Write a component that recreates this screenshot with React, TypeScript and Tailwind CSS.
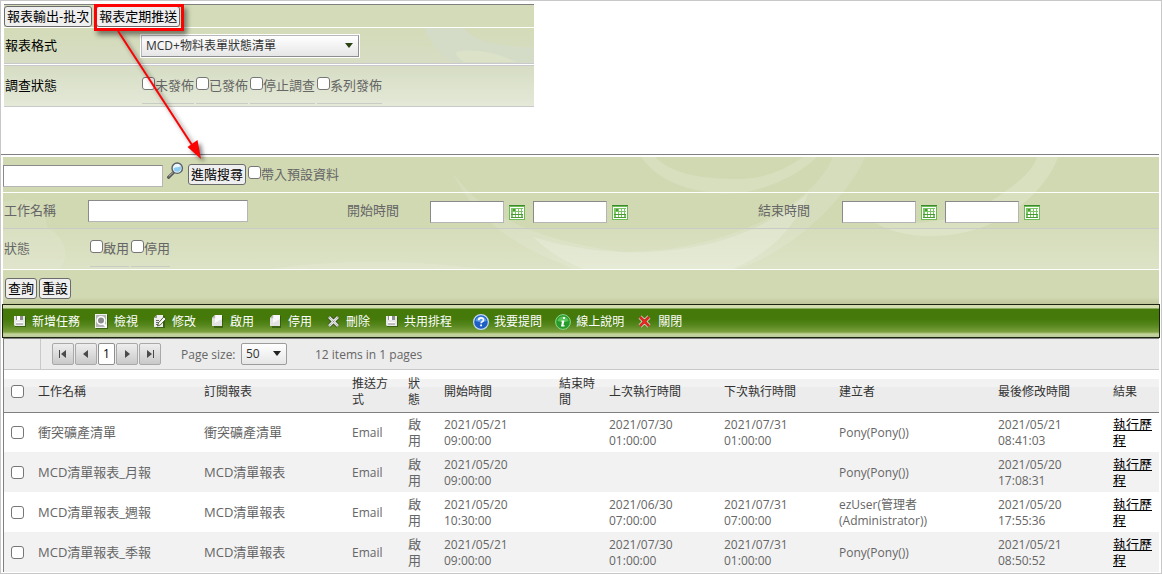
import React from 'react';
import clsx from 'clsx';

const FONT = "font-['Open_Sans','Noto_Sans_CJK_TC',sans-serif]";

type IconName = 'save' | 'view' | 'edit' | 'page' | 'remove' | 'help' | 'info' | 'close';

const actions: { label: string; icon: IconName; spaced?: boolean }[] = [
  { label: '新增任務', icon: 'save' },
  { label: '檢視', icon: 'view' },
  { label: '修改', icon: 'edit' },
  { label: '啟用', icon: 'page' },
  { label: '停用', icon: 'page' },
  { label: '刪除', icon: 'remove' },
  { label: '共用排程', icon: 'save' },
  { label: '我要提問', icon: 'help', spaced: true },
  { label: '線上說明', icon: 'info' },
  { label: '關閉', icon: 'close' },
];

const columns = [
  { title: '工作名稱', width: '' },
  { title: '訂閱報表', width: 'w-[148px]' },
  { title: '推送方式', width: 'w-[56px]' },
  { title: '狀態', width: 'w-[36px]' },
  { title: '開始時間', width: 'w-[115px]' },
  { title: '結束時間', width: 'w-[50px]' },
  { title: '上次執行時間', width: 'w-[115px]' },
  { title: '下次執行時間', width: 'w-[115px]' },
  { title: '建立者', width: 'w-[159px]' },
  { title: '最後修改時間', width: 'w-[115px]' },
  { title: '結果', width: 'w-[53px]' },
];

const jobs = [
  {
    name: '衝突礦產清單',
    report: '衝突礦產清單',
    start: '2021/05/21 09:00:00',
    last: '2021/07/30 01:00:00',
    next: '2021/07/31 01:00:00',
    owner: 'Pony(Pony())',
    modified: '2021/05/21 08:41:03',
  },
  {
    name: 'MCD清單報表_月報',
    report: 'MCD清單報表',
    start: '2021/05/20 09:00:00',
    last: '',
    next: '',
    owner: 'Pony(Pony())',
    modified: '2021/05/20 17:08:31',
  },
  {
    name: 'MCD清單報表_週報',
    report: 'MCD清單報表',
    start: '2021/05/20 10:30:00',
    last: '2021/06/30 07:00:00',
    next: '2021/07/31 07:00:00',
    owner: 'ezUser(管理者(Administrator))',
    modified: '2021/05/20 17:55:36',
  },
  {
    name: 'MCD清單報表_季報',
    report: 'MCD清單報表',
    start: '2021/05/21 09:00:00',
    last: '2021/07/30 01:00:00',
    next: '2021/07/31 01:00:00',
    owner: 'Pony(Pony())',
    modified: '2021/05/21 08:50:52',
  },
];

function Button({ children }: { children: React.ReactNode }) {
  return (
    <button
      type="button"
      className="block h-[21px] shrink-0 whitespace-nowrap rounded-[3px] border border-[#6b6b6b] bg-[#efefef] px-0.5 text-[13px] leading-[19px] text-black"
    >
      {children}
    </button>
  );
}

const boxClass =
  'block size-[13px] shrink-0 appearance-none rounded-[3px] border border-[#767676] bg-white checked:bg-[#4c7d12]';

function Check({ label, underline }: { label: string; underline?: boolean }) {
  return (
    <label
      className={clsx(
        'flex items-start whitespace-nowrap leading-4',
        underline && 'h-[27px] border-b border-[#c9ccc4]'
      )}
    >
      <input type="checkbox" className={boxClass} />
      <span>{label}</span>
    </label>
  );
}

const textBox = 'block h-[22px] border border-[#b5b5b5] border-t-[#8a8a8a] border-l-[#8a8a8a] bg-white px-1 outline-none';

function DateRange({ label, id }: { label: string; id: string }) {
  return (
    <div className="flex items-center gap-2 pt-0.5">
      {['from', 'to'].map((part) => (
        <div key={part} className="flex items-center gap-[5px]">
          <input
            id={`${id}-${part}`}
            type="text"
            aria-label={`${label} ${part}`}
            className={clsx(textBox, 'w-[74px]')}
          />
          <button type="button" aria-label={label}>
            <CalendarIcon />
          </button>
        </div>
      ))}
    </div>
  );
}

function CalendarIcon() {
  return (
    <svg width="16" height="16" viewBox="0 0 16 16" className="block" shapeRendering="crispEdges">
      <path fill="#6cbb56" d="M0 1h16v15H0z" />
      <path fill="#3d8a2c" d="M0 1h16v1H0z" />
      <path fill="#fff" d="M1 3h14v12H1z" />
      <path fill="#7cc567" d="M2 4h12v10H2z" />
      <path fill="#4a9a32" d="M4 5h2v2H4zM2 10h12v1H2zM2 13h12v1H2z" />
      <path fill="#fff" d="M7 5h2v2H7zM10 5h2v2h-2zM13 5h1v2h-1zM4 8h2v2H4zM7 8h2v2H7zM10 8h2v2h-2zM13 8h1v2h-1zM4 11h2v2H4zM7 11h2v2H7zM10 11h2v2h-2z" />
    </svg>
  );
}

function SearchIcon() {
  return (
    <svg width="17" height="17" viewBox="0 0 17 17" className="block">
      <path d="M6.5 10.5 1.5 15.3" stroke="#555" strokeWidth="3" strokeLinecap="round" />
      <path d="M6 10.5 2 14.3" stroke="#b9b9b9" strokeWidth="1" strokeLinecap="round" />
      <circle cx="10.2" cy="6.2" r="5.2" fill="#eef7fd" stroke="#5a5f66" strokeWidth="1.4" />
      <path d="M6.5 6.5c2-2 4-.6 7.3-2.3 1 3-.8 5.6-3.6 5.6-2.2 0-3.6-1.3-3.7-3.3z" fill="#8ccdf3" />
    </svg>
  );
}

function ActionIcon({ name }: { name: IconName }) {
  const svg = { width: 16, height: 16, viewBox: '0 0 16 16', className: 'block shrink-0' };
  switch (name) {
    case 'save':
      return (
        <svg {...svg}>
          <path d="M4 3h11v10H4z" fill="#24480a" opacity=".6" />
          <path d="M3 2h11v10H4l-1-1z" fill="#e8e8e8" />
          <path d="M5 2h7v4H5z" fill="#8e8e8e" />
          <path d="M6 2h3v4H6z" fill="#fff" />
          <path d="M5 8h7v3H5z" fill="#bdbdbd" />
          <path d="M5 8h7v1H5z" fill="#fff" />
        </svg>
      );
    case 'view':
      return (
        <svg {...svg}>
          <path d="M3 1h12v14H3z" fill="#24480a" opacity=".6" />
          <path d="M2 0h12v14H2z" fill="#f1f1f1" />
          <path d="M3 1h10v12H3z" fill="#b5b5b5" />
          <circle cx="8" cy="6.5" r="3.8" fill="#8b8b8b" stroke="#fff" strokeWidth="1.6" />
          <path d="m10.5 9.5 3 3.5" stroke="#fff" strokeWidth="2" />
        </svg>
      );
    case 'edit':
      return (
        <svg {...svg}>
          <path d="M7 2h7v12H5V5z" fill="#24480a" opacity=".6" />
          <path d="M6 1h6v12H3V4z" fill="#ededed" />
          <path d="M3 4h3V1z" fill="#9a9a9a" />
          <path d="M5 6.5h3M5 8.5h3M5 10.5h2" stroke="#666" />
          <path d="m6.5 12 1-3.2L12.8 3l2.2 1.9-5.6 6z" fill="#fff" stroke="#3f5526" strokeWidth=".9" />
        </svg>
      );
    case 'page':
      return (
        <svg {...svg}>
          <path d="M7 2h7v12H5V5z" fill="#24480a" opacity=".6" />
          <path d="M6 1h7v11H3V4z" fill="#e3e3e3" />
          <path d="M6 1h7v4L6 9z" fill="#f8f8f8" />
          <path d="M3 4.2h3.2V1z" fill="#bdbdbd" />
        </svg>
      );
    case 'remove':
      return (
        <svg {...svg}>
          <path d="m4 3 9 9M13 3l-9 9" stroke="#27420f" strokeWidth="4" />
          <path d="m4 3 9 9M13 3l-9 9" stroke="#e6e6e6" strokeWidth="2.8" />
          <path d="m4 3 9 9M13 3l-9 9" stroke="#7b7b7b" strokeWidth=".8" strokeDasharray="1 1" />
        </svg>
      );
    case 'close':
      return (
        <svg {...svg}>
          <path d="m3 3 9 9M12 3l-9 9" stroke="#fff" strokeWidth="4" />
          <path d="m3 3 9 9M12 3l-9 9" stroke="#5f1208" strokeWidth="2.6" />
          <path d="m3 3 9 9M12 3l-9 9" stroke="#f0281c" strokeWidth="1.8" />
        </svg>
      );
    case 'help':
      return (
        <svg {...svg}>
          <circle cx="8" cy="8" r="7.4" fill="#1f5fc4" stroke="#c5daf7" strokeWidth="1.2" />
          <path d="M2.5 7a5.6 5.6 0 0 1 11 0c-3 1.5-7 1.5-11 0z" fill="#5d9bea" />
          <path d="M5.7 6.2c0-3 4.8-3 4.8-.3 0 1.8-2.4 1.6-2.4 3.4" fill="none" stroke="#fff" strokeWidth="1.7" />
          <path d="M7.2 10.5H9v1.8H7.2z" fill="#fff" />
        </svg>
      );
    case 'info':
      return (
        <svg {...svg}>
          <circle cx="8" cy="8" r="7.4" fill="#269b2c" stroke="#8fd68c" strokeWidth="1" />
          <path d="M2.5 7a5.6 5.6 0 0 1 11 0c-3 1.5-7 1.5-11 0z" fill="#57c455" />
          <path d="M8 3h2v2H8zM6.5 6.4H9.4L8.4 11.2H9.6v1.2H6l1-4.8H6.2z" fill="#fff" />
        </svg>
      );
  }
}

function PagerButton({ label, path }: { label: string; path: string }) {
  return (
    <button
      type="button"
      aria-label={label}
      className="flex size-[22px] items-center justify-center rounded-[2px] border border-[#a9a9a9] bg-linear-to-b from-[#eeeeee] to-[#c9c9c9]"
    >
      <svg width="10" height="10" viewBox="0 0 10 10" className="block">
        <path d={path} fill="#4a4a4a" />
      </svg>
    </button>
  );
}

function Caret({ className }: { className: string }) {
  return (
    <svg width="8" height="5" viewBox="0 0 8 5" className={clsx('pointer-events-none absolute', className)}>
      <path d="M0 0h8L4 5z" fill="currentColor" />
    </svg>
  );
}

// faint leaf-like strokes behind the search form
function Swirls() {
  return (
    <svg
      className="pointer-events-none absolute inset-x-0 top-0 h-[112px] w-full"
      viewBox="0 0 1156 112"
      preserveAspectRatio="none"
    >
      <g fill="#fff">
        <path opacity=".16" d="M638 0C660 30 700 38 735 36 770 32 800 14 814 0H800C780 14 760 22 735 22 700 22 670 18 652 0z" />
        <path opacity=".18" d="M1055 0C1045 30 1010 60 980 70 940 85 890 80 870 64 920 70 960 62 985 46 1010 30 1030 15 1034 0z" />
        <path opacity=".12" d="M862 0C850 30 800 90 735 112H570C545 100 480 80 450 16 480 60 540 85 620 95 720 95 810 50 830 0z" />
        <path opacity=".18" d="M530 80C600 102 680 100 740 76 765 66 790 50 805 36 795 66 770 95 730 112H580C560 104 545 94 530 80z" />
        <path opacity=".1" d="M0 45C30 37 42 49 44 70 62 80 68 100 56 112H0z" />
        <path opacity=".12" d="M270 112C300 106 390 100 480 112z" />
      </g>
    </svg>
  );
}

function ReportPanel() {
  return (
    <section className="relative ml-[3px] mt-[3px] max-w-[530px] border-t border-[#808080] bg-white text-[13px]">
      <div className="flex h-[23px] items-center gap-1 border-b border-white bg-[#d4dbb8]">
        <Button>報表輸出-批次</Button>
        <div className="relative z-10">
          <Button>報表定期推送</Button>
          <div className="pointer-events-none absolute -bottom-1 -left-0.5 -right-1 -top-0.5 border-[3px] border-[#fb0203] shadow-[3px_4px_5px_rgba(0,0,0,0.45)]" />
        </div>
      </div>
      <div className="relative flex h-9 items-center border-b border-[#c9c9cb] bg-linear-to-b from-[#d4dbb8] to-[#d6ddc4] pl-px text-black">
        {/* pale leaf on the right end of the row */}
        <svg
          className="pointer-events-none absolute right-0 top-0 h-full w-[110px]"
          viewBox="0 0 110 35"
          preserveAspectRatio="none"
        >
          <path d="M0 0h40c10 12 25 18 70 20v15H30C15 26 5 12 0 0z" fill="#d4dcc8" />
          <path d="M32 24c15-4 40 0 60 10H40c-5-3-8-6-8-10z" fill="#dce2c8" />
        </svg>
        <label htmlFor="format" className="w-[136px]">
          報表格式
        </label>
        <div className="relative outline outline-white">
          <select
            id="format"
            className="block h-[22px] w-[218px] appearance-none border border-[#b9b9b9] border-r-[#8d8d8d] border-b-[#8d8d8d] bg-linear-to-b from-white to-[#e6e6e6] pl-1 text-xs text-[#333] outline-none"
          >
            <option>MCD+物料表單狀態清單</option>
          </select>
          <Caret className="right-1.5 top-2 text-[#2b4311]" />
        </div>
      </div>
      <div className="mt-px flex h-[42px] items-center border-y border-[#c9c9cb] bg-linear-to-b from-[#d6ddc3] to-[#e4e9d8] pl-px">
        <span className="w-[137px] text-black">調查狀態</span>
        <div className="flex gap-0.5 self-end pb-0.5 text-[#666]">
          {['未發佈', '已發佈', '停止調查', '系列發佈'].map((label) => (
            <Check key={label} label={label} underline />
          ))}
        </div>
      </div>
    </section>
  );
}

function SearchForm() {
  return (
    <section className="relative mx-0.5 mt-0.5 bg-[#d1d9b3] text-[13px] text-[#666]">
      <Swirls />
      <div className="relative flex h-9 items-center border-b border-white">
        <input type="text" aria-label="搜尋" className={clsx(textBox, 'mt-0.5 w-40')} />
        <button type="button" aria-label="搜尋" className="mb-2 ml-1 mr-1">
          <SearchIcon />
        </button>
        <Button>進階搜尋</Button>
        <div className="mb-0.5 ml-0.5">
          <Check label="帶入預設資料" />
        </div>
      </div>
      <div className="relative grid h-9 grid-cols-[84px_259fr_83px_328fr_84px_317fr] items-center border-b border-[#c8cbc6] pl-px">
        <label htmlFor="job-name">工作名稱</label>
        <input id="job-name" type="text" className={clsx(textBox, 'w-40')} />
        <label htmlFor="start-from">開始時間</label>
        <DateRange id="start" label="開始時間" />
        <label htmlFor="end-from">結束時間</label>
        <DateRange id="end" label="結束時間" />
      </div>
      <div className="relative flex h-[41px] items-center border-b border-white bg-linear-to-b from-white/10 to-white/25 pl-px">
        <span className="w-[86px]">狀態</span>
        <div className="flex gap-0.5 self-end pb-0.5">
          <Check label="啟用" underline />
          <Check label="停用" underline />
        </div>
      </div>
      <div className="relative flex h-[34px] items-center gap-0.5 bg-[linear-gradient(#d1d9b3_80%,#bfc699)] pl-0.5 pt-0.5">
        <Button>查詢</Button>
        <Button>重設</Button>
      </div>
    </section>
  );
}

function Toolbar() {
  return (
    <div
      role="toolbar"
      className="mx-px flex h-[34px] items-center gap-[13px] border border-[#1c2410] bg-[linear-gradient(#d3deb0_0,#d3deb0_3px,#457a0b_4px,#457a0b_14px,#55861c_20px,#7ba03f_27px,#c6d59d_29px,#b9c99a_100%)] px-2 pt-0.5 text-xs text-white"
    >
      {actions.map((a) => (
        <button
          key={a.label}
          type="button"
          className={clsx('flex items-center gap-[5px] whitespace-nowrap', a.spaced && 'ml-2')}
        >
          <ActionIcon name={a.icon} />
          <span>{a.label}</span>
        </button>
      ))}
    </div>
  );
}

function Pager() {
  return (
    <div className="flex h-[31px] items-stretch border-b border-[#c9c9c9] bg-[#ececec] text-xs text-[#666]">
      <div className="w-[37px] border-r border-[#c9c9c9]" />
      <div className="flex items-center gap-px pl-[11px]">
        <PagerButton label="First" path="M1 1h1v8H1zM8 1v8L3 5z" />
        <PagerButton label="Previous" path="M7 1v8L2 5z" />
        <button
          type="button"
          className="h-[22px] w-[17px] rounded-[2px] border border-[#8f8f8f] bg-white text-center text-black"
        >
          1
        </button>
        <PagerButton label="Next" path="M3 1v8l5-4z" />
        <PagerButton label="Last" path="M2 1v8l5-4zM8 1h1v8H8z" />
      </div>
      <label htmlFor="page-size" className="w-20 self-center pl-5 pt-px">
        Page size:
      </label>
      <div className="relative self-center">
        <select
          id="page-size"
          className="block h-[22px] w-[46px] appearance-none rounded-[2px] border border-[#9c9c9c] bg-linear-to-b from-white to-[#e6e6e6] pl-1 text-xs text-[#333] outline-none"
        >
          <option>50</option>
        </select>
        <Caret className="right-1.5 top-2 text-[#222]" />
      </div>
      <span className="self-center pl-7 pt-px">12 items in 1 pages</span>
    </div>
  );
}

const latinCell = 'px-[7px] pt-0.5 text-xs leading-4';

function JobTable() {
  return (
    <table className="w-full table-fixed border-collapse text-left text-[13px] leading-4 text-[#666]">
      <thead className="bg-[linear-gradient(#fff_9px,#f2f2f2_9px,#f2f2f2_17px,#ececec_17px)] text-xs leading-4 text-[#333]">
        <tr className="h-[42px] border-b border-[#808080]">
          <th className="w-[27px] pl-[7px] pt-0.5">
            <input type="checkbox" aria-label="全選" className={boxClass} />
          </th>
          {columns.map((c) => (
            <th key={c.title} className={clsx('px-[7px] pt-0.5 font-normal', c.width)}>
              {c.title}
            </th>
          ))}
        </tr>
      </thead>
      <tbody>
        {jobs.map((job) => (
          <tr key={job.name} className="h-10 odd:bg-white even:bg-[#f2f2f2]">
            <td className="pl-[7px]">
              <input type="checkbox" aria-label={job.name} className={boxClass} />
            </td>
            <td className="px-[7px]">{job.name}</td>
            <td className="px-[7px]">{job.report}</td>
            <td className={latinCell}>Email</td>
            <td className="px-[7px]">啟用</td>
            <td className={latinCell}>{job.start}</td>
            <td />
            <td className={latinCell}>{job.last}</td>
            <td className={latinCell}>{job.next}</td>
            <td className={latinCell}>{job.owner}</td>
            <td className={latinCell}>{job.modified}</td>
            <td className="px-[7px]">
              <a href="#history" className="text-black underline">
                執行歷程
              </a>
            </td>
          </tr>
        ))}
      </tbody>
    </table>
  );
}

export default function App() {
  return (
    <div className={clsx('relative w-full border border-[#c8c8c8] bg-white pb-px', FONT)}>
      <ReportPanel />

      <div className="mr-0.5 mt-[47px] border-t border-[#808080]" />
      <SearchForm />
      <Toolbar />
      <div className="mx-0.5 border-l border-t border-[#808080]">
        <Pager />
        <JobTable />
      </div>

      {/* callout arrow from the tab button down to the search button */}
      <svg
        width="110"
        height="140"
        viewBox="0 0 110 140"
        className="pointer-events-none absolute left-[109px] top-[29px] z-20 drop-shadow-[3px_3px_2px_rgba(0,0,0,0.5)]"
      >
        <path d="M8 1 84 118" stroke="#fb0203" strokeWidth="2" />
        <path d="m91 129-13.5-12 10-7z" fill="#fb0203" />
      </svg>
    </div>
  );
}
